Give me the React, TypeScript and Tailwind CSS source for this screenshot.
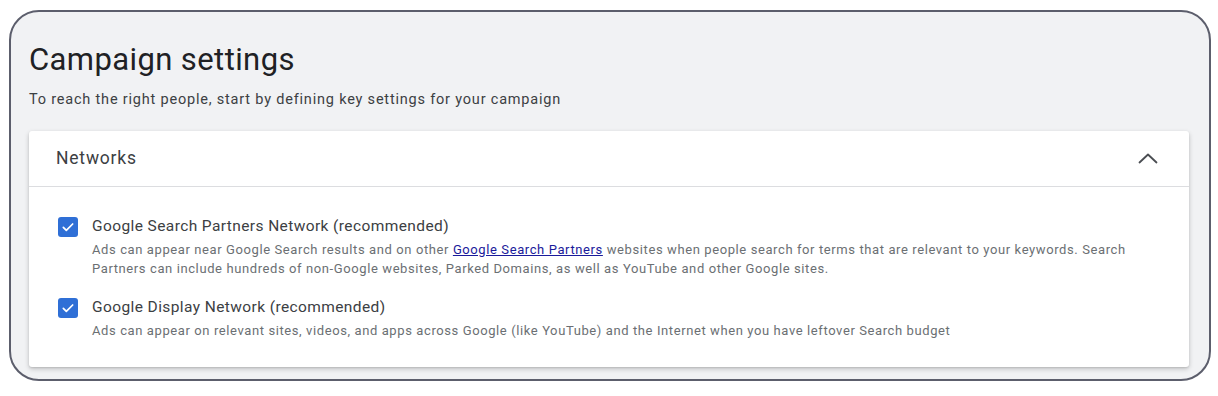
interface NetworkOptionProps {
  title: string;
  children: React.ReactNode;
  className?: string;
}

function CheckBox() {
  return (
    <span className="mt-[2px] flex h-[20px] w-[20px] shrink-0 items-center justify-center rounded-[3px] bg-[#2f6fd6]">
      <svg viewBox="0 0 24 24" className="h-[16px] w-[16px]" fill="none" stroke="white" strokeWidth="2.6" strokeLinecap="round" strokeLinejoin="round">
        <path d="M5 12.5l4.5 4.5L19 7.5" />
      </svg>
    </span>
  );
}

function NetworkOption({ title, children, className }: NetworkOptionProps) {
  return (
    <div className={`flex gap-[14px] ${className ?? ''}`}>
      <CheckBox />
      <div>
        <div className="text-[15.5px] leading-[22px] tracking-[0.4px] text-[#3c4043]">{title}</div>
        <p className="mt-[2.5px] max-w-[1045px] text-[13px] leading-[19px] tracking-[0.6px] text-[#6b6f73]">{children}</p>
      </div>
    </div>
  );
}

export default function App() {
  return (
    <div className="min-h-[396px] bg-white pt-[10px] pr-[7px] pb-[14px] pl-[9px] font-['Roboto',sans-serif]">
      <div className="rounded-[30px] border-2 border-[#5c5e6c] bg-[#f1f2f4] pt-[28px] pr-[20px] pb-[12px] pl-[18px]">
        <h1 className="text-[31px] leading-[40px] tracking-[0.4px] text-[#202124]">Campaign settings</h1>
        <p className="mt-[10px] text-[14.5px] leading-[20px] tracking-[0.8px] text-[#3c4043]">
          To reach the right people, start by defining key settings for your campaign
        </p>

        <div className="mt-[21px] rounded-[3px] bg-white shadow-[0_2px_5px_rgba(0,0,0,0.2),0_1px_2px_rgba(0,0,0,0.1)]">
          <div className="flex h-[56px] items-center justify-between border-b border-[#dcdde0] pr-[31px] pl-[27px]">
            <span className="text-[17.5px] tracking-[0.8px] text-[#3c4043]">Networks</span>
            <svg viewBox="0 0 20 11" className="h-[11px] w-[20px]" fill="none" stroke="#4a4d52" strokeWidth="1.8" strokeLinecap="round" strokeLinejoin="round">
              <path d="M1.5 9.5L10 1.5l8.5 8" />
            </svg>
          </div>

          <div className="flex flex-col pt-[28px] pb-[27px] pl-[29px]">
            <NetworkOption title="Google Search Partners Network (recommended)">
              Ads can appear near Google Search results and on other{' '}
              <a className="text-[#1a1a9b] underline">Google Search Partners</a> websites when people search for terms
              that are relevant to your keywords. Search Partners can include hundreds of non-Google websites, Parked
              Domains, as well as YouTube and other Google sites.
            </NetworkOption>
            <NetworkOption className="mt-[18.5px]" title="Google Display Network (recommended)">
              Ads can appear on relevant sites, videos, and apps across Google (like YouTube) and the Internet when you
              have leftover Search budget
            </NetworkOption>
          </div>
        </div>
      </div>
    </div>
  );
}
